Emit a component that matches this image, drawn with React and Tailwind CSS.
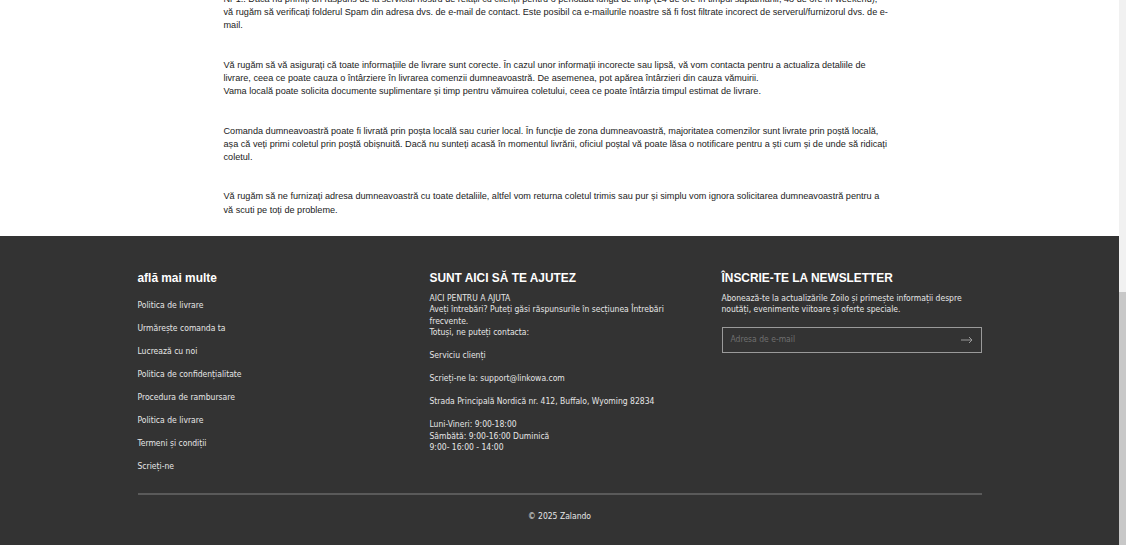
export default function App() {
  const body = { fontFamily: '"Liberation Sans", Arial, sans-serif' };
  const foot = { fontFamily: '"Liberation Sans Narrow", "DejaVu Sans Condensed", Roboto, sans-serif' };
  const links = [
    "Politica de livrare",
    "Urmărește comanda ta",
    "Lucrează cu noi",
    "Politica de confidențialitate",
    "Procedura de rambursare",
    "Politica de livrare",
    "Termeni și condiții",
    "Scrieți-ne",
  ];
  return (
    <div className="flex w-[1126px] h-[545px] overflow-hidden bg-white">
      <div className="w-[1119px] flex flex-col">
        <div className="bg-white text-[#222] text-[9.15px] leading-[13.2px] pb-[19px] -mt-[7px]" style={body}>
          <div className="w-[672px] mx-auto flex flex-col gap-[26.2px]">
            <p>
              Nr 1.: Dacă nu primiți un răspuns de la serviciul nostru de relații cu clienții pentru o perioadă lungă de timp (24 de ore în timpul săptămânii, 48 de ore în weekend), vă{"\u00A0"}rugăm să verificați folderul Spam din adresa dvs. de e-mail de contact. Este posibil ca e-mailurile noastre să fi fost filtrate incorect de serverul/furnizorul dvs. de e-mail.
            </p>
            <p>
              Vă rugăm să vă asigurați că toate informațiile de livrare sunt corecte. În cazul unor informații incorecte sau lipsă, vă vom contacta pentru a actualiza detaliile de livrare, ceea ce poate cauza o întârziere în livrarea comenzii dumneavoastră. De asemenea, pot apărea întârzieri din cauza vămuirii.
              <br />
              Vama locală poate solicita documente suplimentare și timp pentru vămuirea coletului, ceea ce poate întârzia timpul estimat de livrare.
            </p>
            <p>
              Comanda dumneavoastră poate fi livrată prin poșta locală sau curier local. În funcție de zona dumneavoastră, majoritatea comenzilor sunt livrate prin poștă locală, așa că veți primi coletul prin poștă obișnuită. Dacă nu sunteți acasă în momentul livrării, oficiul poștal vă poate lăsa o notificare pentru a ști cum și de unde să ridicați coletul.
            </p>
            <p>
              Vă rugăm să ne furnizați adresa dumneavoastră cu toate detaliile, altfel vom returna coletul trimis sau pur și simplu vom ignora solicitarea dumneavoastră pentru a vă{"\u00A0"}scuti pe toți de probleme.
            </p>
          </div>
        </div>
        <footer className="flex-1 bg-[#333333] text-[#e6e6e6]">
          <div className="w-[844px] mx-auto pt-[34px]">
            <div className="grid grid-cols-3 gap-[32px]">
              <div>
                <h3 className="text-white font-bold text-[11.9px] leading-[16px] mb-[13px]" style={body}>află mai multe</h3>
                <ul className="flex flex-col gap-[11px] text-[8.5px] leading-[12px]" style={foot}>
                  {links.map((l, i) => (
                    <li key={i}>{l}</li>
                  ))}
                </ul>
              </div>
              <div>
                <h3 className="text-white font-bold text-[11.9px] leading-[16px] mb-[7px]" style={body}>SUNT AICI SĂ TE AJUTEZ</h3>
                <div className="text-[8.5px] leading-[11.5px]" style={foot}>
                  <p>AICI PENTRU A AJUTA</p>
                  <p>Aveți întrebări? Puteți găsi răspunsurile în secțiunea Întrebări frecvente.</p>
                  <p>Totuși, ne puteți contacta:</p>
                  <p className="mt-[11.5px]">Serviciu clienți</p>
                  <p className="mt-[11.5px]">Scrieți-ne la: support@linkowa.com</p>
                  <p className="mt-[11.5px]">Strada Principală Nordică nr. 412, Buffalo, Wyoming 82834</p>
                  <p className="mt-[11.5px]">Luni-Vineri: 9:00-18:00</p>
                  <p>Sâmbătă: 9:00-16:00 Duminică</p>
                  <p>9:00- 16:00 - 14:00</p>
                </div>
              </div>
              <div>
                <h3 className="text-white font-bold text-[11.9px] leading-[16px] mb-[7px]" style={body}>ÎNSCRIE-TE LA NEWSLETTER</h3>
                <p className="text-[8.5px] leading-[11.5px]" style={foot}>
                  Abonează-te la actualizările Zoilo și primește informații despre noutăți, evenimente viitoare și oferte speciale.
                </p>
                <div className="mt-[11px] h-[26px] border border-[#9a9a9a] flex items-center justify-between px-[8px]">
                  <span className="text-[8.5px] text-[#6f6f6f]" style={foot}>Adresa de e-mail</span>
                  <svg width="12" height="8" viewBox="0 0 12 8" fill="none" stroke="#9a9a9a" strokeWidth="1">
                    <path d="M0 4h11M8 1l3 3-3 3" />
                  </svg>
                </div>
              </div>
            </div>
            <div className="mt-[21px] h-[2px] bg-[#5a5a5a]" />
            <p className="text-center text-[8.5px] mt-[15px]" style={foot}>© 2025 Zalando</p>
          </div>
        </footer>
      </div>
      <div className="w-[7px] flex flex-col bg-[#f1f1f1]">
        <div className="h-[292px]" />
        <div className="flex-1 bg-[#c8c8c8]" />
      </div>
    </div>
  );
}
